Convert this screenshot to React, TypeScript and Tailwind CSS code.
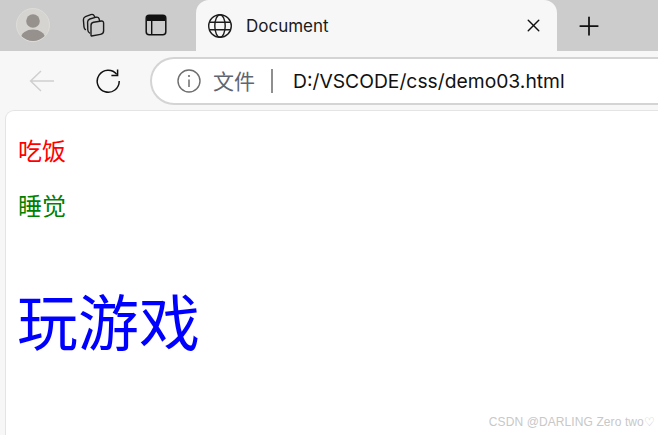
import { X, Plus } from "lucide-react";

const cjk = "font-['Inter','Noto_Sans_CJK_SC',sans-serif]";

function TabStrip() {
  return (
    <div className="flex h-[51px] shrink-0 bg-[#cccccc]">
      <div className="flex w-[196px] shrink-0 items-center pl-[16px] pb-[1px]">
        <svg width="34" height="34" viewBox="0 0 34 34" className="shrink-0">
          <defs>
            <clipPath id="avatar">
              <circle cx="17" cy="17" r="16" />
            </clipPath>
          </defs>
          <circle cx="17" cy="17" r="16.5" fill="#d6d4d1" stroke="#dedcd9" />
          <g clipPath="url(#avatar)" fill="#96918d">
            <circle cx="17" cy="13" r="6.8" />
            <ellipse cx="17" cy="30" rx="12" ry="8.5" />
          </g>
        </svg>
        <svg width="26" height="26" viewBox="0 0 26 26" fill="none" stroke="#1a1a1a" strokeWidth="1.4" strokeLinejoin="round" strokeLinecap="round" className="ml-[30px] shrink-0">
          <path d="M11.5 24 L20.5 22.4 Q23.6 21.8 23.6 19 L23.6 11 Q23.6 8.8 21.4 9 L13.6 10.3 Q11 10.8 11 13.4 L11 22.6 Q11 24.2 11.5 24 Z" />
          <path d="M19.6 8.6 L19 6.6 Q18.3 4.8 16.2 5.2 L9.8 7 Q7.6 7.8 7.6 10 L7.8 18 Q8 20 9.6 21" />
          <path d="M14.6 4.6 L13.6 3 Q12.6 2 10.8 2.6 L5.4 4.6 Q3.2 5.6 3.4 8 L4 15 Q4.2 16.6 5.4 17.6" />
        </svg>
        <svg width="24" height="24" viewBox="0 0 24 24" fill="none" className="ml-[38px] shrink-0">
          <rect x="2.2" y="2.2" width="19.6" height="19.6" rx="3" stroke="#111111" strokeWidth="1.5" />
          <path d="M3 3.5 Q3 2.5 5 2.5 L19 2.5 Q21 2.5 21 3.5 L21 8 L3 8 Z" fill="#111111" />
          <path d="M7.7 8 L7.7 21" stroke="#111111" strokeWidth="1.4" />
        </svg>
      </div>
      <div className="flex w-[361px] shrink-0 items-center rounded-t-[13px] bg-[#f7f7f7] pl-[11px]">
        <svg width="26" height="26" viewBox="0 0 26 26" fill="none" stroke="#1c1c1c" strokeWidth="1.4" className="shrink-0">
          <circle cx="13" cy="13" r="11.3" />
          <ellipse cx="13" cy="13" rx="5.2" ry="11.3" />
          <path d="M2.6 9.2 H23.4 M2.6 16.8 H23.4" />
        </svg>
        <span className="ml-[13px] pt-[2px] font-['Inter',sans-serif] text-[17px] leading-none text-[#1a1a1a]">Document</span>
        <X size={21} strokeWidth={1.6} className="ml-auto mr-[13px] text-[#111111]" />
      </div>
      <div className="flex flex-1 items-center pl-[17px]">
        <Plus size={30} strokeWidth={1.4} className="text-[#111111]" />
      </div>
    </div>
  );
}

function Toolbar() {
  return (
    <div className="flex h-[59px] shrink-0 items-center bg-[#f7f7f7]">
      <svg width="28" height="24" viewBox="0 0 28 24" fill="none" stroke="#cfcfcf" strokeWidth="1.5" className="ml-[28px] shrink-0">
        <path d="M26 12 H3 M13 2 L2.6 12 L13 22" />
      </svg>
      <svg width="26" height="26" viewBox="0 0 26 26" fill="none" stroke="#111111" strokeWidth="1.5" className="ml-[39px] shrink-0">
        <path d="M21.8 6.4 A11 11 0 1 0 24.2 13" />
        <path d="M22.6 1.6 V7.6 H16.4" />
      </svg>
      <div className="ml-[29px] flex h-[48px] flex-1 items-center rounded-l-[24px] border-y-2 border-l-2 border-[#d4d4d4] bg-white pl-[25px]">
        <svg width="24" height="24" viewBox="0 0 24 24" fill="none" className="shrink-0">
          <circle cx="12" cy="12" r="11" stroke="#6e6e6e" strokeWidth="1.4" />
          <circle cx="12" cy="7" r="1.1" fill="#6e6e6e" />
          <path d="M12 10.4 V18" stroke="#6e6e6e" strokeWidth="1.5" />
        </svg>
        <span className={`${cjk} ml-[12px] pt-[1px] text-[21px] leading-none text-[#5f6670]`}>文件</span>
        <span className="ml-[16px] h-[24px] w-[2px] bg-[#8f8f8f]" />
        <span className="ml-[20px] pt-[2px] font-['Inter',sans-serif] text-[19.3px] leading-none text-[#111111]">D:/VSCODE/css/demo03.html</span>
      </div>
    </div>
  );
}

export default function App() {
  return (
    <div className="flex h-[435px] w-[658px] flex-col overflow-hidden bg-[#f7f7f7]">
      <TabStrip />
      <Toolbar />
      <div className="relative ml-[5px] flex-1 rounded-tl-[9px] border-l border-t border-[#e4e4e4] bg-white pl-[12px] pt-[25px]">
        <p className={`${cjk} text-[24px] leading-[32px] text-[#ff0000]`}>吃饭</p>
        <p className={`${cjk} mt-[23px] text-[24px] leading-[32px] text-[#008000]`}>睡觉</p>
        <p className={`${cjk} -ml-[1px] mt-[61px] text-[61px] leading-[80px] text-[#0000ff]`}>玩游戏</p>
        <span className="absolute bottom-[7px] right-[3px] font-['Liberation_Sans',sans-serif] text-[12px] leading-none tracking-[0.1px] text-[#c8c8c8]">CSDN @DARLING Zero two♡</span>
      </div>
    </div>
  );
}
